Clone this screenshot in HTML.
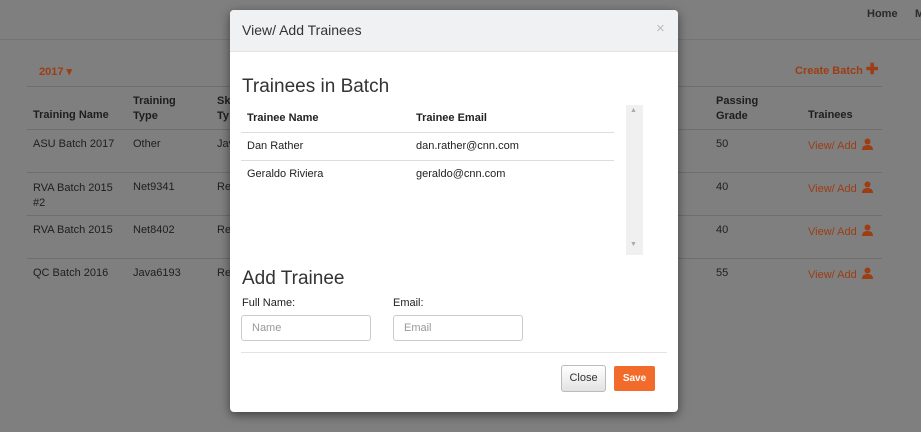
<!DOCTYPE html>
<html style="background:#7f7f7f"><head><meta charset="utf-8"><style>
*{margin:0;padding:0;box-sizing:border-box}
body{width:921px;height:432px;background:#7f7f7f;font-family:"Liberation Sans",sans-serif;position:relative;overflow:hidden;color:#1e1e1e;font-size:11px}
.bg{position:absolute;left:0;top:0;width:921px;height:432px;background:#7f7f7f}
.a{position:absolute;white-space:nowrap}
.b{font-weight:bold}
.o{color:#9c3d14}
.hl{position:absolute;height:1px;background:#6e6e6e}
.modal{position:absolute;left:230px;top:10px;width:448px;height:402px;background:#fff;border-radius:4px;box-shadow:0 3px 10px rgba(0,0,0,.5);overflow:hidden;color:#222}
.mh{position:absolute;left:0;top:0;width:448px;height:42px;background:#f0f1f3;border-bottom:1px solid #e3e3e3}
.inp{position:absolute;width:130px;height:26px;border:1px solid #ccc;border-radius:3px;color:#999;font-size:11px;padding:6px 10px;background:#fff}
.ic{display:inline-block;vertical-align:-1px;margin-left:5px}
</style></head><body>
<div class="bg"></div>
<div class="hl" style="left:0;top:39px;width:921px;background:#747474"></div>
<div class="a b" style="left:867px;top:8px;color:#2a2a2a">Home</div>
<div class="a b" style="left:915px;top:8px;color:#2a2a2a">M</div>
<div class="a b o" style="left:39px;top:65px">2017 ▾</div>
<div class="a b o" style="left:795px;top:65px">Create Batch <span style="font-size:15px;line-height:10px">✚</span></div>
<div class="hl" style="left:27px;top:86px;width:855px"></div>
<div class="a b" style="left:33px;top:109px">Training Name</div>
<div class="a b" style="left:133px;top:94px;line-height:15px">Training<br>Type</div>
<div class="a b" style="left:217px;top:94px;line-height:15px">Sk<br>Ty</div>
<div class="a b" style="left:716px;top:94px;line-height:15px">Passing<br>Grade</div>
<div class="a b" style="left:808px;top:109px">Trainees</div>
<div class="hl" style="left:27px;top:129px;width:855px"></div>
<div class="hl" style="left:27px;top:172px;width:855px"></div>
<div class="hl" style="left:27px;top:215px;width:855px"></div>
<div class="hl" style="left:27px;top:258px;width:855px"></div>
<div class="a" style="left:33px;top:138px">ASU Batch 2017</div><div class="a" style="left:133px;top:138px">Other</div><div class="a" style="left:217px;top:138px">Jav</div><div class="a" style="left:716px;top:138px">50</div>
<div class="a" style="left:33px;top:181px;line-height:15px">RVA Batch 2015<br>#2</div><div class="a" style="left:133px;top:181px">Net9341</div><div class="a" style="left:217px;top:181px">Rev</div><div class="a" style="left:716px;top:181px">40</div>
<div class="a" style="left:33px;top:224px">RVA Batch 2015</div><div class="a" style="left:133px;top:224px">Net8402</div><div class="a" style="left:217px;top:224px">Rev</div><div class="a" style="left:716px;top:224px">40</div>
<div class="a" style="left:33px;top:267px">QC Batch 2016</div><div class="a" style="left:133px;top:267px">Java6193</div><div class="a" style="left:217px;top:267px">Rev</div><div class="a" style="left:716px;top:267px">55</div>
<div class="a o" style="left:808px;top:138px">View/ Add<svg class="ic" width="11" height="12" viewBox="0 0 11 12"><circle cx="5.5" cy="3.5" r="3" fill="#9c3d14"/><path d="M0 12 Q0 7 5.5 7 Q11 7 11 12Z" fill="#9c3d14"/></svg></div>
<div class="a o" style="left:808px;top:181px">View/ Add<svg class="ic" width="11" height="12" viewBox="0 0 11 12"><circle cx="5.5" cy="3.5" r="3" fill="#9c3d14"/><path d="M0 12 Q0 7 5.5 7 Q11 7 11 12Z" fill="#9c3d14"/></svg></div>
<div class="a o" style="left:808px;top:224px">View/ Add<svg class="ic" width="11" height="12" viewBox="0 0 11 12"><circle cx="5.5" cy="3.5" r="3" fill="#9c3d14"/><path d="M0 12 Q0 7 5.5 7 Q11 7 11 12Z" fill="#9c3d14"/></svg></div>
<div class="a o" style="left:808px;top:267px">View/ Add<svg class="ic" width="11" height="12" viewBox="0 0 11 12"><circle cx="5.5" cy="3.5" r="3" fill="#9c3d14"/><path d="M0 12 Q0 7 5.5 7 Q11 7 11 12Z" fill="#9c3d14"/></svg></div>

<div class="modal">
 <div class="mh"></div>
 <div class="a" style="left:12px;top:12px;font-size:14px;color:#333">View/ Add Trainees</div>
 <div class="a" style="left:426px;top:10px;font-size:15px;color:#bbb">×</div>
 <div class="a" style="left:12px;top:66px;font-size:19px;color:#333">Trainees in Batch</div>
 <div class="a b" style="left:17px;top:102px">Trainee Name</div>
 <div class="a b" style="left:186px;top:102px">Trainee Email</div>
 <div class="hl" style="left:11px;top:122px;width:373px;background:#ddd"></div>
 <div class="a" style="left:17px;top:130px">Dan Rather</div>
 <div class="a" style="left:186px;top:130px">dan.rather@cnn.com</div>
 <div class="hl" style="left:11px;top:150px;width:373px;background:#ddd"></div>
 <div class="a" style="left:17px;top:158px">Geraldo Riviera</div>
 <div class="a" style="left:186px;top:158px">geraldo@cnn.com</div>
 <div style="position:absolute;left:396px;top:95px;width:17px;height:150px;background:#f0f0f0"></div>
 <div class="a" style="left:400px;top:97px;font-size:7px;color:#aaa">▲</div>
 <div class="a" style="left:400px;top:231px;font-size:7px;color:#aaa">▼</div>
 <div class="a" style="left:12px;top:258px;font-size:19px;color:#333">Add Trainee</div>
 <div class="a" style="left:12px;top:287px">Full Name:</div>
 <div class="a" style="left:163px;top:287px">Email:</div>
 <div class="inp" style="left:11px;top:305px">Name</div>
 <div class="inp" style="left:163px;top:305px">Email</div>
 <div class="hl" style="left:11px;top:342px;width:426px;background:#e3e3e3"></div>
 <div class="a" style="left:331px;top:355px;width:45px;height:27px;border:1px solid #bbb;border-radius:3px;background:linear-gradient(#fff,#e2e2e2);text-align:center;line-height:25px;color:#333">Close</div>
 <div class="a" style="left:384px;top:356px;width:41px;height:25px;background:#f26b2a;border-radius:2px;text-align:center;line-height:25px;color:#fff;font-weight:bold;font-size:10px">Save</div>
</div>
</body></html>
